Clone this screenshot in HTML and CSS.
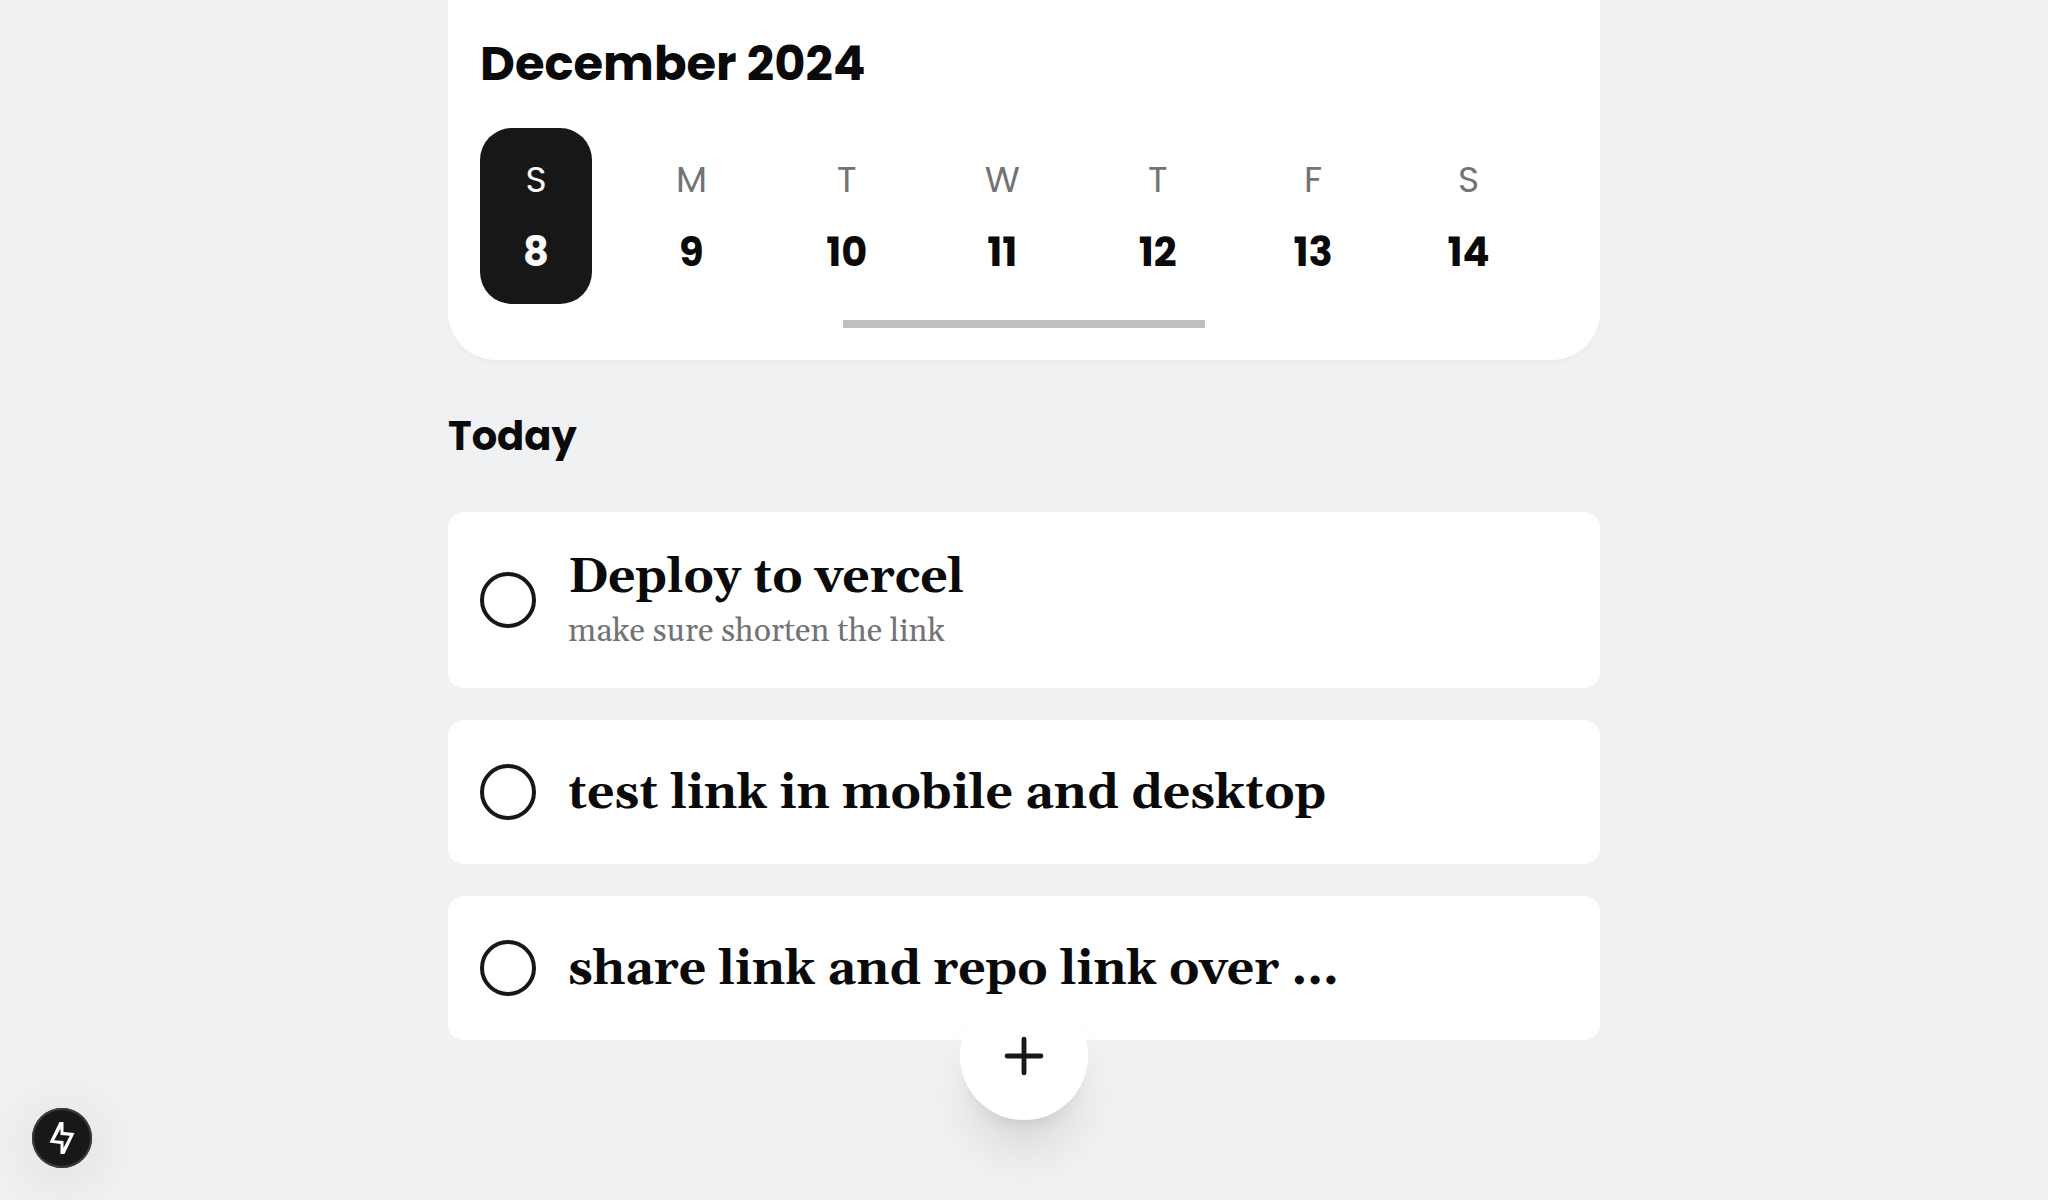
FILE: index.html
```html
<!DOCTYPE html>
<html lang="en">
<head>
<meta charset="utf-8">
<meta name="viewport" content="width=device-width, initial-scale=1">
<title>Tasks</title>
<link rel="stylesheet" href="styles.css">
</head>
<body>
<main class="page">
  <section class="calendar">
    <h1 class="month">December 2024</h1>
    <div class="week">
      <button type="button" class="day day-active"><span class="day-name">S</span><span class="day-number">8</span></button>
      <button type="button" class="day"><span class="day-name">M</span><span class="day-number">9</span></button>
      <button type="button" class="day"><span class="day-name">T</span><span class="day-number">10</span></button>
      <button type="button" class="day"><span class="day-name">W</span><span class="day-number">11</span></button>
      <button type="button" class="day"><span class="day-name">T</span><span class="day-number">12</span></button>
      <button type="button" class="day"><span class="day-name">F</span><span class="day-number">13</span></button>
      <button type="button" class="day"><span class="day-name">S</span><span class="day-number">14</span></button>
    </div>
    <div class="handle"></div>
  </section>

  <h2 class="section-title">Today</h2>

  <ul class="tasks">
    <li class="task">
      <input class="check" type="checkbox" id="task-1">
      <label class="task-text" for="task-1"><span class="task-title">Deploy to vercel</span><span class="task-note">make sure shorten the link</span></label>
    </li>
    <li class="task">
      <input class="check" type="checkbox" id="task-2">
      <label class="task-text" for="task-2"><span class="task-title">test link in mobile and desktop</span></label>
    </li>
    <li class="task">
      <input class="check" type="checkbox" id="task-3">
      <label class="task-text" for="task-3"><span class="task-title">share link and repo link over ...</span></label>
    </li>
  </ul>
</main>

<button type="button" class="add" aria-label="Add task">
  <svg class="add-icon" viewBox="0 0 24 24" fill="none" stroke="currentColor" stroke-width="2" stroke-linecap="round"><path d="M5 12h14M12 5v14"/></svg>
</button>
<button type="button" class="dev" aria-label="Static route">
  <svg class="dev-icon" viewBox="0 0 60 60" fill="currentColor" fill-rule="evenodd"><path d="M27.500 14h4v10l11 1-10 21h-4V36l-11-1.500zM28.500 20.500l-6.300 11.700 9.300.8v7l6.300-12.200-9.300-.8z"/></svg>
</button>
</body>
</html>
```
FILE: styles.css
```css
* {
  box-sizing: border-box;
}

body {
  margin: 0;
  min-height: 100vh;
  background: #eff1f3;
  color: #0a0a0a;
  font-family: Poppins, Inter, sans-serif;
}

button {
  border: 0;
  padding: 0;
  font: inherit;
  color: inherit;
  cursor: pointer;
}

.page {
  max-width: 1152px;
  margin: 0 auto;
}

.calendar {
  padding: 32px;
  background: #fff;
  border-radius: 0 0 48px 48px;
  box-shadow: 0 4px 6px -2px rgba(0, 0, 0, 0.04);
}

.month {
  margin: 0 0 32px;
  font-size: 48px;
  line-height: 64px;
  font-weight: 700;
}

.week {
  display: grid;
  grid-template-columns: repeat(7, 1fr);
}

.day {
  display: flex;
  flex-direction: column;
  align-items: center;
  gap: 16px;
  width: 112px;
  padding: 24px 0;
  border-radius: 32px;
  background: none;
}

.day-active {
  background: #171717;
  color: #fafafa;
}

.day-name {
  font-size: 36px;
  line-height: 56px;
  color: #737373;
}

.day-active .day-name {
  color: inherit;
}

.day-number {
  font-size: 40px;
  line-height: 56px;
  font-weight: 700;
}

.handle {
  width: 33.33%;
  height: 8px;
  margin: 16px auto 0;
  background: #c0c0c0;
}

.section-title {
  margin: 48px 0;
  font-size: 40px;
  line-height: 56px;
  font-weight: 700;
}

.tasks {
  display: flex;
  flex-direction: column;
  gap: 32px;
  margin: 0;
  padding: 0;
  list-style: none;
}

.task {
  display: flex;
  align-items: center;
  gap: 32px;
  min-height: 144px;
  padding: 32px;
  border-radius: 16px;
  background: #fff;
  box-shadow: 0 0 2px #fff;
}

.check {
  appearance: none;
  flex: none;
  width: 56px;
  height: 56px;
  margin: 0;
  border: 4px solid #171717;
  border-radius: 50%;
}

.task-text {
  display: flex;
  flex-direction: column;
  font-family: Georgia, Gelasio, "Liberation Serif", serif;
}

.task-title {
  padding-top: 4px;
  font-size: 48px;
  line-height: 60px;
  font-weight: 700;
}

.task-note {
  font-size: 32px;
  line-height: 48px;
  color: #737373;
}

.add {
  position: fixed;
  bottom: 80px;
  left: calc(50% - 64px);
  display: grid;
  place-items: center;
  width: 128px;
  height: 128px;
  border-radius: 50%;
  background: #fff;
  color: #171717;
  box-shadow: 0 40px 50px -10px rgba(0, 0, 0, 0.1), 0 16px 20px -12px rgba(0, 0, 0, 0.1);
}

.add-icon {
  width: 58px;
  height: 58px;
}

.dev {
  position: fixed;
  bottom: 32px;
  left: 32px;
  width: 60px;
  height: 60px;
  border-radius: 50%;
  background: #18181a;
  color: #fff;
  box-shadow: inset 0 0 0 2px #3a3a3c, 0 8px 64px rgba(0, 0, 0, 0.12);
}

.dev-icon {
  display: block;
  width: 60px;
  height: 60px;
}
```
